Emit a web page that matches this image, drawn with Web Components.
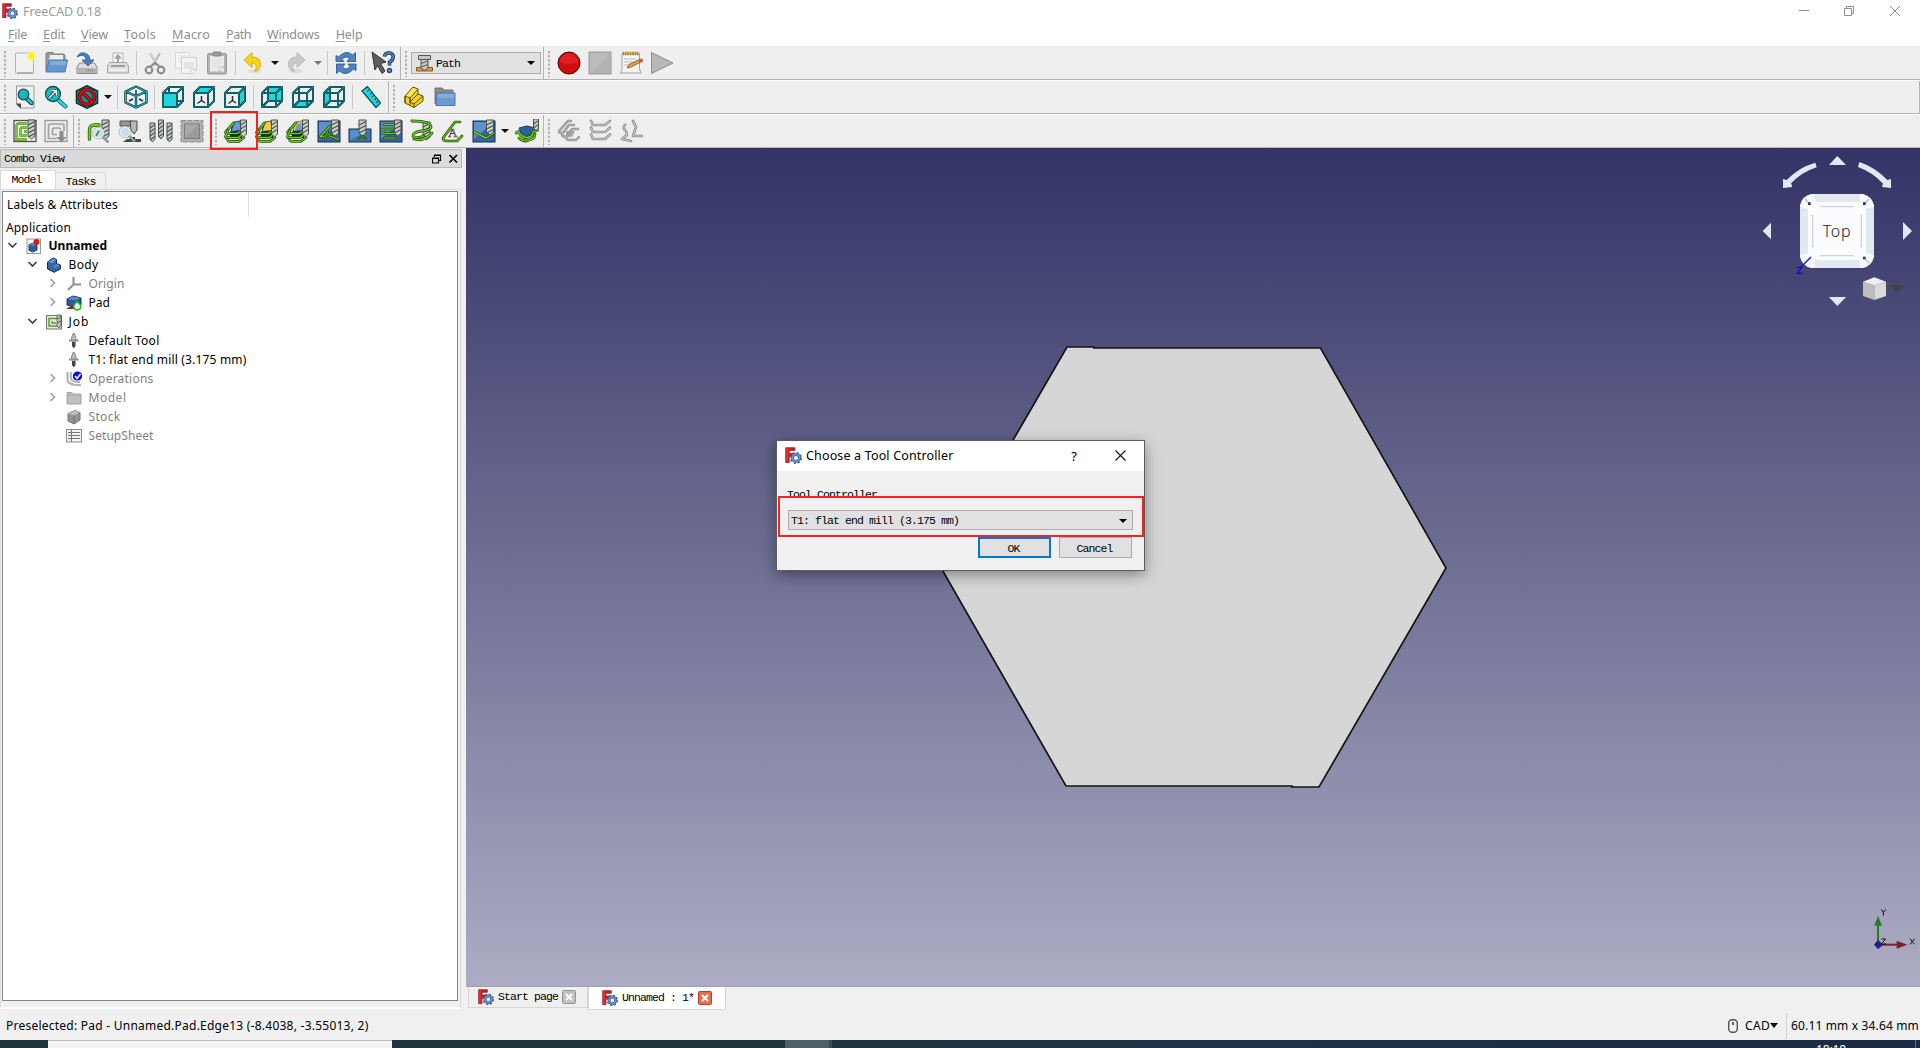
<!DOCTYPE html>
<html lang="en">
<head>
<meta charset="utf-8">
<title>FreeCAD 0.18</title>
<style>
html,body{margin:0;padding:0;height:100%;overflow:hidden;background:#f0f0f0}
</style>
</head>
<body>
<fc-window></fc-window>
<script>
const define=(name,css,html,setup)=>customElements.define(name,class extends HTMLElement{
  connectedCallback(){
    if(this.shadowRoot)return;
    const t=document.createElement('template');
    t.innerHTML='<style>'+css+'</style>'+(typeof html==='function'?html(this):html);
    this.attachShadow({mode:'open'}).appendChild(t.content.cloneNode(true));
    if(setup)setup(this);
  }
});

/* ---------- text ---------- */
const SANS='"Noto Sans","Noto Sans CJK SC",sans-serif', MONO='"Liberation Mono","Noto Sans CJK SC",monospace';
const pen=document.createElement('canvas').getContext('2d');
define('ui-text',
 ':host{display:inline-block;white-space:pre;line-height:16px;flex:none}',
 '<slot></slot>',
 el=>{
  const mono=el.hasAttribute('mono'), size=el.getAttribute('size')||(mono?'11.5':'12');
  const font=(el.hasAttribute('bold')?'bold ':'')+size+'px '+(mono?MONO:SANS);
  el.style.font=font; el.style.lineHeight='16px';
  const w=+el.getAttribute('w');
  if(w){pen.font=font;const s=el.textContent;
   el.style.letterSpacing=((w-pen.measureText(s).width)/s.length).toFixed(3)+'px';}
 });

/* ---------- icons ---------- */
const drill=(x,y,w,h,f='#c9cec9')=>{
 let s=`<path d="M${x} ${y}h${w}v${h-3}l${-w/2} 3l${-w/2} -3z" fill="${f}" stroke="#4a4f4a" stroke-width="1"/>`;
 for(let i=5;i<h-1;i+=4)s+=`<path d="M${x} ${y+i}l${w} -3.6" stroke="#4a4f4a" stroke-width="1.1"/>`;
 return s;};
const green=(d,w=2)=>`<path d="${d}" fill="none" stroke="#1f4d07" stroke-width="${w+1}" stroke-linejoin="round" stroke-linecap="round"/><path d="${d}" fill="none" stroke="#73d216" stroke-width="${w-.5}" stroke-linejoin="round" stroke-linecap="round"/>`;
const grey=(d,w=2)=>`<path d="${d}" fill="none" stroke="#8a8a8a" stroke-width="${w+1}" stroke-linejoin="round" stroke-linecap="round"/><path d="${d}" fill="none" stroke="#c8c8c8" stroke-width="${w-.6}" stroke-linejoin="round" stroke-linecap="round"/>`;
const cube=face=>{
 const faces={front:'M2 8H16V22H2z',top:'M2 8L8 2H22L16 8z',right:'M16 8L22 2V16L16 22z',rear:'M8 2H22V16H8z',bottom:'M2 22L8 16H22L16 22z',left:'M2 8L8 2V16L2 22z'};
 const back='M8 2V16H22M8 16L2 22',front='M2 8H16V22H2zM2 8L8 2H22V16L16 22M16 8L22 2';
 const ln=d=>`<path d="${d}" fill="none" stroke="#06343a" stroke-width="2" stroke-linejoin="round"/><path d="${d}" fill="none" stroke="#16a5ab" stroke-width=".8"/>`;
 const axis='<path d="M9.500 15.500V11M9.500 15.500L5.500 18.500M9.500 15.500L13 18" stroke="#1d3033" stroke-width="1.500" fill="none"/>';
 const f=`<path d="${faces[face]}" fill="#20d6da"/>`;
 if(face==='front')return ln(back)+f+ln(front);
 if(face==='top'||face==='right')return f+axis+ln(front);
 return ln(back)+f+ln(back)+ln(front);};
const depthBlock=c=>`<path d="M8 6L18 3V19L5 20z" fill="#12294a"/><path d="M10 3L16 2L17 11.500L7 12.500z" fill="${c}" stroke="#16335c" stroke-width=".8"/>`;
const greenLoops=green('M9.5 4L1.700 13Q1.200 14.500 3 14.500H13L17 12',1.7)+green('M4 11.500L1.500 17.500Q1.500 18.700 3 18.700H14L19 15',1.7)+green('M3.500 20.500Q4 22.400 6 22.400H15L20 18.500',1.6);
const blueSq='<rect x="1" y="2" width="22" height="21" fill="#3465a4" stroke="#152c50"/><path d="M2 3H22L2 20z" fill="#6ba0da" opacity=".75"/>';
const logo='<path d="M1 1H14V5H6V9H12V13H6V22H1z" fill="#d21920" stroke="#8a1015" stroke-width="1"/><path d="M1.5 1.5H5V21.5H1.5z" fill="#f0474a" opacity=".45"/><circle cx="15.5" cy="15.5" r="5" fill="none" stroke="#3c5f9a" stroke-width="4.4"/><circle cx="15.5" cy="15.5" r="7.4" fill="none" stroke="#3c5f9a" stroke-width="2.4" stroke-dasharray="2.9 2.9"/><circle cx="15.5" cy="15.5" r="5" fill="none" stroke="#6f94cb" stroke-width="2.4"/>';
const lens=(x,y,r)=>`<path d="M${x+r*.6} ${y+r*.6}L${x+r*1.8} ${y+r*1.7}" stroke="#999" stroke-width="3" stroke-linecap="round"/><circle cx="${x}" cy="${y}" r="${r}" fill="#c7dbef" fill-opacity=".9" stroke="#e8eef3" stroke-width="1.6"/><circle cx="${x}" cy="${y}" r="${r+.9}" fill="none" stroke="#8b98a5" stroke-width=".6"/>`;
const jobPath='M14 20.500H3.500V7Q3.500 4.500 6 4.500H14M14 16.500H7.500V10.500Q7.500 8.500 9.500 8.500H14M14 12.500H11';
const icons={
 logo,
 new:'<rect x="2.5" y="2" width="18" height="20.5" rx="1" fill="#f1f1ef" stroke="#b2b2b0"/><path d="M4 21.8H20" stroke="#999"/><circle cx="18.500" cy="5" r="5" fill="#fff27a" opacity=".8"/><circle cx="18.500" cy="5" r="3" fill="#fdf01c"/>',
 open:'<path d="M2 20V3Q2 1.500 4 1.500H9L10 3H19Q21 3 21 5V20z" fill="#9a9a98" stroke="#7b7b79"/><path d="M6 4H19V10H5z" fill="#eee"/><path d="M5.500 9H23.500L21 21H2z" fill="#6797cf" stroke="#4877b3"/><path d="M6.500 10H22.500L21.800 14H5.500z" fill="#8fb6e2" opacity=".7"/>',
 save:'<path d="M4.500 12L2 16V22.500H22V16L19.500 12z" fill="#dcdcda" stroke="#8b8b89"/><rect x="2.500" y="17" width="19" height="5" fill="#b5b5b3"/><path d="M11 19.500H19" stroke="#777" stroke-width="1.500" stroke-dasharray="1 1"/><path d="M2 6Q5 0 11 2.500Q15 4 15 9H19L13 15L7 9H11Q11 5 8 4.500Q5 4 2 6z" fill="#4a7dbb" stroke="#2c5990" stroke-width=".8"/>',
 print:'<path d="M7 12V2H17V12" fill="#f4f4f4" stroke="#b5b5b5"/><path d="M12 11V5M9.500 7.500L12 4.500L14.500 7.500" fill="none" stroke="#a0a0a0" stroke-width="2"/><path d="M3.500 11.500H20.500L22.500 15V22H1.500V15z" fill="#dededd" stroke="#a3a3a3"/><path d="M5 15H19" stroke="#8e8e8e" stroke-width="1.600"/><path d="M3 19H21" stroke="#efefef" stroke-width="2"/>',
 cut:'<path d="M7 2L14.500 15M17 2L9.500 15" stroke="#c0c0c0" stroke-width="2.400"/><path d="M7 2L14.500 15" stroke="#dcdcdc" stroke-width="1"/><circle cx="6" cy="19" r="3.300" fill="none" stroke="#8d8d8d" stroke-width="2.200"/><circle cx="18" cy="19" r="3.300" fill="none" stroke="#8d8d8d" stroke-width="2.200"/><path d="M7.500 15.500L12 12L16.500 15.500" fill="none" stroke="#8d8d8d" stroke-width="2.200"/>',
 copy:'<rect x="1.500" y="1.500" width="14" height="15.500" fill="#f5f5f5" stroke="#d8d8d8"/><path d="M4 5H13M4 8H8M4 11H8" stroke="#ddd"/><path d="M7.500 6.500H22.500V19L19 22.500H7.500z" fill="#f4f4f4" stroke="#d0d0d0"/><path d="M10 11H20V18H10z" fill="#e4e4e4"/><path d="M17 22.500V18.500H22" fill="#fff" stroke="#ccc"/>',
 paste:'<rect x="2.500" y="2.500" width="19" height="20.500" rx="1.500" fill="#b4b4b4" stroke="#989898"/><rect x="5" y="5" width="14" height="15.500" fill="#ebebeb"/><rect x="8" y="1" width="8" height="4" rx="1" fill="#9d9d9d" stroke="#828282"/><path d="M7 9H17M7 12H17M7 15H13" stroke="#dadada"/><path d="M14 20.500V16H19z" fill="#fff" stroke="#bbb"/>',
 undo:'<ellipse cx="13" cy="20" rx="7" ry="2" fill="#dfdfdf"/><path d="M2 9L10 1.500V6Q19 6 18.500 14Q18 19.500 12.500 20.500Q15 17 14 14.500Q13 12 10 12V16.500z" fill="#f2d51c" stroke="#d0ac12" stroke-width=".9"/>',
 redo:'<ellipse cx="11" cy="20" rx="7" ry="2" fill="#dcdcdc"/><path d="M20 9L12 1.500V6Q3 6 3.500 14Q4 19.500 9.500 20.500Q7 17 8 14.500Q9 12 12 12V16.500z" fill="#c9c9c9" stroke="#b6b6b6" stroke-width=".9"/>',
 refresh:'<path d="M2 10.500V4.500L4.500 6Q12 -2 18.500 4L21.500 1.500V10.500H13L15.500 7.500Q11.500 4 8 8.500L10 10.500z" fill="#4f82c2" stroke="#2b5a96" stroke-width=".9"/><path d="M22 13V19.500L19.500 18Q12 26 5.500 20L2.500 22.500V13H11L8.500 16Q12.500 20 16 15.500L14 13z" fill="#4f82c2" stroke="#2b5a96" stroke-width=".9"/>',
 whats:'<path d="M1 1L15 11L9.500 12.500L14 20L11 22.500L6.500 14.500L4 19z" fill="#5d605a" stroke="#2e312d"/><path d="M13.500 5.500Q14 1.500 18.500 2Q23 2.500 22 7Q21.500 9.500 18.500 11V14.500" fill="none" stroke="#16305a" stroke-width="3.600"/><path d="M13.500 5.500Q14 1.500 18.500 2Q23 2.500 22 7Q21.500 9.500 18.500 11V14.500" fill="none" stroke="#4a7dbb" stroke-width="2"/><circle cx="18.500" cy="19.500" r="2.300" fill="#4a7dbb" stroke="#16305a"/>',
 record:'<circle cx="12" cy="12" r="11" fill="#d20d10" stroke="#3a0a0a"/><path d="M3 11A9 9 0 0 1 21 11Q12 15 3 11z" fill="#ee3234" opacity=".5"/>',
 stop:'<rect x="1" y="1" width="22" height="22" fill="#b3b3b3" stroke="#9b9b9b"/><path d="M2 2H22L2 22z" fill="#bfbfbf" opacity=".7"/>',
 note:'<path d="M3 3H20.500V18L22 22H1.500L3 18z" fill="#f4f4f2" stroke="#a2a2a0"/><path d="M3.500 2.500H20.500" stroke="#a58e25" stroke-width="3.400" stroke-dasharray="1.700 .7"/><path d="M5 8H17M5 11H15M5 14H10" stroke="#bbb"/><path d="M8 17L10 13.500L20.500 8.500L22 11L12 16z" fill="#d8a54b" stroke="#80501a" stroke-width=".8"/><circle cx="22" cy="9.500" r="2" fill="#e2503c"/>',
 play:'<path d="M1.500 1.500L23 12L1.500 22.500z" fill="#b7b7b7" stroke="#8e8e8e"/>',
 fit:'<path d="M3.500 1H21V23H7L3.500 19.500z" fill="#f0f0ef" stroke="#9a9a98"/><path d="M3 18.500H8V23.500z" fill="#444"/><path d="M14 14L18.500 18" stroke="#0a3b3e" stroke-width="4.400" stroke-linecap="round"/><path d="M14 14L18.500 18" stroke="#1bc5ca" stroke-width="2.600" stroke-linecap="round"/><circle cx="10.500" cy="9.500" r="5.300" fill="#21b3ba" stroke="#0a5055" stroke-width="1.200"/>',
 zoom:'<path d="M13 14L21.500 21.500" stroke="#0a3b3e" stroke-width="4" stroke-linecap="round"/><path d="M13 14L21.500 21.500" stroke="#25dfe4" stroke-width="2.800" stroke-linecap="round"/><circle cx="9" cy="9" r="7.500" fill="#23b9c0" stroke="#0a5055" stroke-width="1.300"/><path d="M5 13L12 6M7.500 5.500H12.500V10.500" stroke="#083638" stroke-width="3" fill="none"/><path d="M5 13L12 6M7.500 5.500H12.500V10.500" stroke="#fff" stroke-width="1.500" fill="none"/>',
 draw:'<path d="M12 .8L22.500 6V18L12 23.200L1.500 18V6z" fill="#168e94" stroke="#06343a" stroke-width="1.600"/><circle cx="12" cy="12" r="7.500" fill="none" stroke="#4a0a0a" stroke-width="3.700"/><path d="M6.500 6.500L17.500 17.500" stroke="#4a0a0a" stroke-width="3.700"/><circle cx="12" cy="12" r="7.500" fill="none" stroke="#cc1117" stroke-width="2.300"/><path d="M6.500 6.500L17.500 17.500" stroke="#cc1117" stroke-width="2.300"/>',
 iso:'<g fill="none" stroke-linejoin="round"><path d="M12 1.500L22.500 6.500V17.500L12 22.500L1.500 17.500V6.500zM1.500 6.500L12 11L22.500 6.500M12 11V22.500" stroke="#06343a" stroke-width="2.400"/><path d="M12 5V11M5 16L9 14M19 16L15 14" stroke="#1d3033" stroke-width="1.500"/><path d="M12 1.500L22.500 6.500V17.500L12 22.500L1.500 17.500V6.500zM1.500 6.500L12 11L22.500 6.500M12 11V22.500" stroke="#1fc0c5" stroke-width="1"/></g>',
 ruler:'<path d="M3 6L8.500 1.500L21.500 18L17 22.500z" fill="#20d6da" stroke="#0a5055" stroke-width="1.200"/><path d="M8.500 1.500l-2 2M10.700 4.400l-2.500 2M13 7.300l-2 2M15.200 10.100l-2.500 2M17.400 13l-2 2M19.600 15.800l-2.500 2" stroke="#0a5055" stroke-width="1.100"/>',
 part:'<g stroke="#5c4d00" stroke-width="1" stroke-linejoin="round"><path d="M3 11L11 2L16 4V9L21 11V16L12 22.500L3 18z" fill="#f0d22a"/><path d="M3 11L8 13L16 4M8 13V17L12 19L21 11M12 19V22.500M3 18V11M8 13V20M8 17L16 9" fill="none"/></g><path d="M4 11L11 3L15 4.500L8 12z" fill="#fbe95c"/>',
 group:'<path d="M2 19V3H9L11 5H20V19z" fill="#898987" stroke="#72726f"/><path d="M4 8H22V20.500H3z" fill="#6b9bd2" stroke="#4877b3"/><path d="M5 9H21V13H4.500z" fill="#8fb6e2" opacity=".7"/>',
 job:`<rect x="1" y="1.500" width="22" height="21" fill="#f1f3ee" stroke="#4d524a" stroke-width="1.300"/><path d="${jobPath}" fill="none" stroke="#4b8a1f" stroke-width="2.300"/><path d="${jobPath}" fill="none" stroke="#7ec83a" stroke-width="1.300"/>`+drill(15,1,7,19),
 export:'<rect x="1" y="1.500" width="22" height="21" fill="#ebebeb" stroke="#9a9a9a" stroke-width="1.300"/><path d="M13 19.500H4.500V7Q4.500 5 6.500 5H18Q20 5 20 7V12M13 15.500H8.500V11Q8.500 9 10.500 9H14.500Q16.500 9 16.500 11" fill="none" stroke="#a3a3a3" stroke-width="1.600"/><path d="M15.500 12H19.500V18H22.500L17.500 23.500L12.500 18H15.500z" fill="#8b8b8b"/>',
 inspect:green('M2.500 20V11Q2.500 6 8 6H12',2.4)+drill(15,1,7,19)+lens(11.5,14,5)+'<path d="M12 12L9 17" stroke="#3f8b25" stroke-width="1.5"/>',
 sim:'<path d="M2 2H14V7H2z" fill="#949a94" stroke="#555"/><path d="M12 2H19V11L16 15L13 11z" fill="#b5bab5" stroke="#454a45"/><path d="M9 20H23V23H5z" fill="#454a45"/><path d="M12 18H17V21H12z" fill="#222"/>'+lens(7,13,5),
 tools:drill(1,4,5,19,'#c4c9c4')+drill(9.5,1,5,19,'#c4c9c4')+drill(18,4,5,19,'#c4c9c4'),
 fixture:'<rect x="1" y="1.500" width="22" height="21.500" fill="#b0b0b0" stroke="#8f8f8f" stroke-dasharray="5 1.500"/><rect x="4.500" y="5" width="15" height="14.500" fill="#9b9b9b" stroke="#7d7d7d"/><path d="M5 5.500H19L5 19z" fill="#b0b0b0" opacity=".6"/>',
 contour:depthBlock('#6a9ad4')+greenLoops+drill(16.500,1,6,17),
 pocketshape:depthBlock('#f2cf3a')+greenLoops+drill(16.500,1,6,17),
 profedge:depthBlock('#6a9ad4')+'<path d="M8 11L10.500 4L16 3L16.500 9" fill="none" stroke="#f2c62a" stroke-width="1.900"/>'+greenLoops+drill(16.500,1,6,17),
 pocket3d:blueSq+green('M13 7L3 18L11 16.500L22 20.500',1.7)+green('M11 12L8 21M11 16L20 13.500',1.3)+drill(14.500,1,7,16),
 drilling:'<rect x="1" y="10" width="22" height="13" fill="#3f72b3" stroke="#152c50"/><path d="M2 11H22L2 21z" fill="#6ba0da" opacity=".6"/>'+drill(11,1,7,16)+green('M11 19.5L14.5 17L18 19.5',1.2),
 face:blueSq+green('M17 5.500H5M17 10H4M4 10V14.500H17M17 19H5',1.600)+drill(15.500,1,6.500,16),
 helix:drill(13,3,7,18)+green('M2 2Q21 2 21 8Q20 11 12 12Q3 13 3 17Q4 20 14 17M4 20Q14 23 22 14',1.800),
 engrave:green('M19 3H14L2 19Q2 22 6 22H16L21 17',1.700)+'<text x="7" y="18" font-family="Liberation Serif,serif" font-size="13" fill="#b8b8b8" stroke="#444" stroke-width=".6">A</text>',
 threed:blueSq+green('M2 13L14 19L22 14',1.900)+drill(14.500,1,7,15),
 surface:'<path d="M4 9L12 7L20 9L18 15L12 17L6 14z" fill="#2b62a6" stroke="#183a66"/>'+green('M1 14Q4 11 5 15Q9 20 14 18Q18 17 18 13L23 11',1.900)+green('M4 19Q10 25 19 19L20 15',1.700)+drill(18.500,0,5,12),
 dress1:'<path d="M9 12H18L15 18H9z" fill="#a5a5a5"/>'+grey('M14 2H11L2 12Q2 14 5 14M17 6H12L5 15Q5 18 9 18M21 10H15L9 18Q9 21 13 21H19L22 18',1.400),
 dress2:grey('M3 2L5 6H17L22 2M3 8.500L5 13H17L22 8.500M3 15.500L5 20H17L22 15.500',1.700),
 dress3:grey('M6 6Q3 9 7 12L8 16L3 20L12 22M14 2L17 8L14 17H23',1.700)
};
/* 16 px tree icons */
const small={
 doc:'<rect x="1" y="1" width="13.500" height="14.500" fill="#f5f5f5" stroke="#999"/><path d="M3 6.500L7.500 5L11 6.500V12L7 14L3 12.500z" fill="#2f5c96" stroke="#173860" stroke-width=".8"/><path d="M3 6.500L7.500 5L11 6.500L7 8z" fill="#5e8cc6"/><circle cx="10.500" cy="4" r="3" fill="#e0161b"/>',
 body:'<path d="M1.500 5L7 1L10.500 2.500V6.500L14.500 8V12L8 15.300L1.500 12z" fill="#3465a4" stroke="#152c50"/><path d="M2 5L7 1.500L10 3L6 6.500z" fill="#6392cc"/><path d="M7 9L10.500 7L14 8.500L9 11z" fill="#5585c2"/>',
 origin:'<path d="M7.500 1V8.500H15M7.500 8.500L2 14" fill="none" stroke="#8f8f8f" stroke-width="2"/>',
 pad:'<path d="M1 4L7 1L15 3V10L8 12L1 10z" fill="#2d5b96" stroke="#173860"/><path d="M1.500 4L7 1.500L14.500 3.300L9 5.500z" fill="#5a8ac6"/><path d="M0 14L5 11H9V14z" fill="#9e1c1c"/><path d="M11 6.500L14.500 10V13.500L11 15.300L8 13.500V10z" fill="#fff" stroke="#10c31d" stroke-width="1.500"/>',
 job:'<rect x=".5" y="1.500" width="15" height="13.500" fill="#e4e9de" stroke="#777"/><path d="M11 12H3V4.500H11M10 9H6V7" fill="none" stroke="#5aa02c" stroke-width="1.500"/><path d="M11 1H15V12L13 14L11 12z" fill="#bfc3bf" stroke="#555" stroke-width=".8"/><path d="M11 5L15 3M11 9L15 7" stroke="#444" stroke-width=".8"/>',
 tool:'<path d="M7 .5H8.500L10 5V8H5.500V5z" fill="#b9c1b9" stroke="#6d756d" stroke-width=".8"/><path d="M3 6.500H12.500V8.500H3z" fill="#8b938b"/><path d="M6 9H9.500V13L7.800 15.500L6 13z" fill="#3f463f"/>',
 ops:'<path d="M1.500 1V9Q2.500 14.500 15 14M5 1V8Q6 11 14 11M8 5V8" fill="none" stroke="#b3b3b3" stroke-width="2.200"/><circle cx="11.500" cy="5" r="4.600" fill="#0909ec"/><path d="M9 5L11 7.500L14.500 3" fill="none" stroke="#fff" stroke-width="1.500"/>',
 folder:'<path d="M1 14V2.500H6L7 4H15V14z" fill="#b5b5b5" stroke="#a8a8a8"/><path d="M2 6H14V13H2z" fill="#bfbfbf"/>',
 stock:'<path d="M2 4.500L9 1.500L14 3.500V11L8 15L2 12z" fill="#949494" stroke="#707070"/><path d="M2 4.500L9 1.500L14 3.500L8 6.500z" fill="#bcbcbc"/><path d="M8 6.500V14.500" stroke="#707070"/>',
 sheet:'<rect x=".5" y="1.500" width="15" height="12.500" fill="#f2f2f2" stroke="#8c8c8c"/><path d="M2 4.500H14M2 7.500H14M2 10.500H14" stroke="#777"/><path d="M5.500 2V14" stroke="#777"/>'
};
define('fc-icon',':host{display:block;flex:none}svg{display:block}',el=>{
 const n=el.getAttribute('name'),s=el.getAttribute('size')||24;
 if(n.startsWith('cube-'))return `<svg width="${s}" height="${s}" viewBox="0 0 24 24">${cube(n.slice(5))}</svg>`;
 if(el.hasAttribute('tree'))return `<svg width="16" height="16" viewBox="0 0 16 16">${small[n]}</svg>`;
 return `<svg width="${s}" height="${s}" viewBox="0 0 24 24">${icons[n]}</svg>`;});

/* ---------- window chrome ---------- */
define('fc-titlebar',`:host{display:flex;height:22px;background:#fff;color:#9a9a9a;align-items:center;padding:0 19px 0 2px;box-sizing:border-box}
 ui-text{margin:1px 0 0 5px}svg{margin-left:auto}`,
 `<fc-icon name="logo" size="16"></fc-icon><ui-text size="12.5" w="78">FreeCAD 0.18</ui-text>
 <svg width="102" height="12" viewBox="0 0 102 12" fill="none" stroke="#909090"><path d="M0 5.500H10M45.500 3.500H52.500V10.500H45.500zM47.500 3.500V1.500H54.500V8.500H52.500M91 1L101 11M101 1L91 11"/></svg>`);
define('fc-menubar',`:host{display:flex;height:24px;background:#fff;color:#8d8d8d;gap:16px;padding:5px 0 0 8px;box-sizing:border-box}u{text-underline-offset:2px}`,
 [['File',19],['Edit',22],['View',27],['Tools',32],['Macro',38],['Path',25],['Windows',52.5],['Help',27]].map(([t,w])=>`<ui-text size="12.5" w="${w}"><u>${t[0]}</u>${t.slice(1)}</ui-text>`).join(''));

define('tool-btn',`:host{display:flex;align-items:center;width:31px;height:32px;flex:none}
 :host([menu]){width:43px}fc-icon{margin:0 4.500px 0 2.500px}i{width:0;border:4px solid transparent;border-top-color:var(--dd,#111);border-bottom:0;margin-left:.5px}`,
 el=>`<fc-icon name="${el.getAttribute('icon')}"></fc-icon>`+(el.hasAttribute('menu')?'<i></i>':''));
define('tool-sep',':host{display:block;flex:none;width:1px;height:24px;background:#c8c8c8;margin:0 3px 0 2px}','');
define('tool-group',`:host{display:flex;align-items:center;box-sizing:border-box;height:100%;flex:none;border-right:1px solid #b4b4b4}
 :host([last]){flex:1}
 .h{width:10px;height:27px;flex:none;background:radial-gradient(circle at 5px 2px,#b2b2b2 0 1.200px,transparent 1.500px) 0 0/10px 4.200px}`,'<div class="h"></div><slot></slot>');
define('tool-row',`:host{display:flex;height:34px;box-sizing:border-box;border-top:1px solid #fff;border-bottom:1px solid #b4b4b4;background:#efefef}`,'<slot></slot>');
define('combo-box',`:host{display:flex;align-items:center;box-sizing:border-box;border:1px solid #adadad;background:#e1e1e1;color:#000}
 i{margin-left:auto;border:4px solid transparent;border-top-color:#000;border-bottom:0}`,'<slot></slot><i></i>');
const B=(s)=>s.split(' ').map(n=>n==='|'?'<tool-sep></tool-sep>':n.endsWith('+')?`<tool-btn menu icon="${n.slice(0,-1)}"></tool-btn>`:`<tool-btn icon="${n}"></tool-btn>`).join('');
define('work-combo',`:host{display:block;flex:none;margin:0 2px 0 0}combo-box{width:130px;height:22px;padding:0 5px 0 4px}ui-text{margin:1px 0 0 3px}`,
 `<combo-box><svg width="17" height="17" viewBox="0 0 17 17"><path d="M.5 12.500H16.500V16H.5z" fill="#d99b3e" stroke="#8a5a1c"/><path d="M2.500 .5H14.500V4.500H2.500z" fill="#c3c9c3" stroke="#555"/><path d="M5 4.500H12V13L8.500 15.500L5 13z" fill="#c5cac5" stroke="#555"/><path d="M5 8.500L12 6M5 12L12 9.500" stroke="#555"/></svg><ui-text mono w="24">Path</ui-text></combo-box>`);
define('fc-toolbars',`:host{display:block;position:relative;height:102px}tool-row:first-of-type{border-top-color:#eaeaea}
 .mark{position:absolute;left:210px;top:65px;width:48px;height:39px;box-sizing:border-box;border:2px solid #fb2020;z-index:5}
 .g1{width:401px}.g2{width:143px}.r2{width:389px}.s1{width:74px}.s2{width:137px}.s3{width:333px}.none{border-right:0}`,
 `<tool-row><tool-group class="g1">${B('new open save print | cut copy paste | undo+')}${B('redo+').replace('<tool-btn','<tool-btn style="--dd:#777"')}${B('| refresh | whats')}</tool-group><tool-group class="g2"><work-combo></work-combo></tool-group><tool-group last class="none">${B('record stop note play')}</tool-group></tool-row>
 <tool-row><tool-group class="r2">${B('fit zoom draw+ | iso | cube-front cube-top cube-right | cube-rear cube-bottom cube-left | ruler')}</tool-group><tool-group last>${B('part group')}</tool-group></tool-row>
 <tool-row><tool-group class="s1">${B('job export')}</tool-group><tool-group class="s2">${B('inspect sim tools fixture')}</tool-group><tool-group class="s3">${B('contour pocketshape profedge pocket3d drilling face helix engrave threed+ surface')}</tool-group><tool-group last class="none">${B('dress1 dress2 dress3')}</tool-group></tool-row>
 <div class="mark"></div>`);

/* ---------- combo view dock ---------- */
define('tree-row',`:host{display:flex;align-items:center;height:19px;color:#000}:host([dim]){color:#808080}
 .c{width:22px;height:19px;flex:none}.c svg{display:block}fc-icon{margin:0 6.500px 0 1px}ui-text{margin:0}`,
 el=>{const a=el.getAttribute('arrow');
 return `<span class="c" style="margin-left:${20*el.getAttribute('level')}px"><svg width="22" height="19" viewBox="3 0 22 19" fill="none" stroke-width="1.700">${a==='v'?'<path d="M8.500 7L12.500 11L16.500 7" stroke="#404040"/>':a?'<path d="M10.500 5L14.500 9L10.500 13" stroke="#a2a2a2"/>':''}</svg></span><fc-icon tree name="${el.getAttribute('icon')}"></fc-icon><slot></slot>`;});
const tree=[[0,'v','doc','Unnamed',58.5,'b'],[1,'v','body','Body',30],[2,'>','origin','Origin',36,'d'],[2,'>','pad','Pad',21.500],[1,'v','job','Job',21],[2,'','tool','Default Tool',71],[2,'','tool','T1: flat end mill (3.175 mm)',158],[2,'>','ops','Operations',65,'d'],[2,'>','folder','Model',38,'d'],[2,'','stock','Stock',32,'d'],[2,'','sheet','SetupSheet',65,'d']];
define('fc-dock',`:host{display:flex;flex-direction:column;width:462px;flex:none;height:861px}
 .t{display:flex;align-items:center;box-sizing:border-box;height:19px;margin-top:1px;background:#dadada;border:1px solid #b9b9b9;padding:1px 3px 0 3px}.t svg{margin-left:auto}
 .tabs{display:flex;align-items:flex-end;height:21px;box-sizing:border-box}
 .tab{box-sizing:border-box;border:1px solid #d9d9d9;border-bottom:0;display:flex;justify-content:center;align-items:center}
 .on{background:#fff;width:56px;height:19px;padding-right:3px}.off{width:50px;height:17px;border-left:0;padding-top:1px}
 .pane{flex:1;box-sizing:border-box;border:1px solid #dcdcdc;border-bottom:2px solid #fdfdfd;display:flex;padding:1px 2px 6px 1px;margin-right:1px}
 .tree{flex:1;border:1px solid #828790;background:#fff}
 .head{display:flex;height:25px;width:246px;border-right:1px solid #e0e0e0;box-sizing:border-box;padding:5px 0 0 4px}
 .app{height:19px;padding:1px 0 0 3px;box-sizing:border-box}`,
 `<div class="t"><ui-text mono w="60">Combo View</ui-text><svg width="26" height="10" viewBox="0 0 26 10" fill="none" stroke="#000"><path d="M2.500 3V1H8.500V6.500H6M.5 4H6.500V9H.5zM.5 4.500H6.500M2.500 1.500H8.500" stroke-width="1.200"/><path d="M17.500 1L25 8.500M25 1L17.500 8.500" stroke-width="1.700"/></svg></div>
 <div class="tabs"><div class="tab on"><ui-text mono w="30">Model</ui-text></div><div class="tab off"><ui-text mono w="30">Tasks</ui-text></div></div>
 <div class="pane"><div class="tree"><div class="head"><ui-text w="111">Labels &amp; Attributes</ui-text></div><div class="app"><ui-text w="65">Application</ui-text></div>
 ${tree.map(([l,a,i,t,w,f])=>`<tree-row level="${l}" arrow="${a}" icon="${i}" ${f==='d'?'dim':''}><ui-text ${f==='b'?'bold':''} w="${w}">${t}</ui-text></tree-row>`).join('')}</div></div>`);

/* ---------- 3D view ---------- */
define('nav-cube',':host{display:block;position:absolute;left:1274px;top:-18px}svg{display:block}',
 `<svg width="180" height="190" viewBox="0 0 540 570"><g fill="#e1e9f0"><path d="M267 105L292 78L318 105zM267 501H318L292 528zM93 278V328L68 303zM489 276L516 303L489 330z"/>
 <path d="M226 98L230 112Q186 126 153 160L157 171L129 174L129 147L140 150Q176 112 226 98z"/><path d="M358 96L354 111Q398 127 429 161L426 171L453 174L453 147L442 150Q406 112 358 96z"/>
 <path d="M214 192H368L402 226V380L368 414H214L180 380V226z"/></g>
 <path d="M214 192H222L226 216H204V237L180 230V226Q186 198 214 192zM368 192H360L358 216H378V237L402 230V226Q396 198 368 192zM214 414H222L226 390H204V369L180 376V380Q186 408 214 414zM368 414H360L358 390H378V369L402 376V380Q396 408 368 414z" fill="#f7fafc"/>
 <path d="M216 216H366L378 228V378L366 390H216L204 378V228z" fill="#fafcfd"/>
 <g fill="none" stroke="#cfd2dd" stroke-width="4"><path d="M243 227V230H339V227M243 380V377H339V380M214 256H218V350H214M368 256H364V350H368"/></g>
 <g stroke="#b8bccb" stroke-width="4"><path d="M194 206L212 224M388 206L370 224M388 400L370 382"/></g><g fill="#333362"><path d="M204 217h8v8h-8zM369 217h8v8h-8zM369 380h8v8h-8z"/></g>
 <path d="M213 381L184 410" stroke="#1a1ab0" stroke-width="4"/><path d="M171 412H185L172 430H187" fill="none" stroke="#0a0ad8" stroke-width="3.600"/>
 <text x="290" y="321" text-anchor="middle" font-family="Noto Sans,sans-serif" font-weight="300" font-size="48" textLength="84" fill="#222">Top</text>
 <path d="M369 455L403 466V510L369 498z" fill="#bdbdbd"/><path d="M403 466L438 455V498L403 510z" fill="#dadada"/><path d="M369 455L403 442L438 455L403 466z" fill="#efefef"/><path d="M450 465H492L471 488z" fill="#424242"/></svg>`);
define('axis-cross',':host{display:block;position:absolute;left:1394px;top:752px}svg{display:block}',
 `<svg width="60" height="60" viewBox="480 60 180 180"><path d="M534 194V135" stroke="#228022" stroke-width="6"/><path d="M523 137L534 107L546 137z" fill="#228022"/><path d="M534 194H592" stroke="#7c2424" stroke-width="6"/><path d="M590 182V206L622 194z" fill="#7c2424"/><path d="M534 179L549 194L534 208L522 194z" fill="#20208a"/><g fill="none" stroke="#111" stroke-width="3"><path d="M544 88L550 97L557 88M550 97V107M544 177H557L544 192H558M630 176L644 193M644 176L630 193"/></g></svg>`);
define('fc-viewport',`:host{display:block;position:relative;height:839px;background:linear-gradient(#333366,#acacc4);border-bottom:1px solid #a0a0a8;box-sizing:border-box;overflow:hidden}.s{display:block}`,
 `<svg class="s" width="1454" height="838" viewBox="466 148 1454 838"><path d="M1067 347H1094V348H1320.500L1446 568L1319 787H1292V786H1066L940 566z" fill="#d6d6d6" stroke="#141414" stroke-width="1.700"/></svg><nav-cube></nav-cube><axis-cross></axis-cross>`);
define('doc-tab',`:host{display:flex;box-sizing:border-box;align-items:center;border:1px solid #d6d6d6;border-top:0;height:21px;width:120px;padding:0 0 1px 9px;background:#efefef}
 :host([on]){background:#fff;width:138px;height:23px;padding:0 0 1px 13px}svg{margin-left:4px}fc-icon{margin-right:4px}`,
 el=>{const on=el.hasAttribute('on');return `<fc-icon name="logo" size="16"></fc-icon><slot></slot><svg width="14" height="14" viewBox="0 0 14 14"><rect x=".5" y=".5" width="13" height="13" rx="1" fill="${on?'#e4704e':'#bfc3bf'}" stroke="${on?'#c23a22':'#929692'}"/><path d="M4 4L10 10M10 4L4 10" stroke="#fff" stroke-width="2.200"/></svg>`;});
define('fc-mdi',`:host{display:block;flex:1;min-width:0;margin-left:4px}.tabs{display:flex;align-items:flex-start;padding-left:2px}ui-text{margin-top:1px}`,
 `<fc-viewport></fc-viewport><div class="tabs"><doc-tab><ui-text mono w="60">Start page</ui-text></doc-tab><doc-tab on><ui-text mono w="72">Unnamed : 1*</ui-text></doc-tab></div>`);

/* ---------- dialog ---------- */
define('fc-dialog',`:host{display:block;position:absolute;left:776px;top:440px;width:369px;height:131px;box-sizing:border-box;border:1px solid #5c5c5c;background:#f0f0f0;box-shadow:0 4px 14px rgba(0,0,0,.4);z-index:10;color:#000}
 .t{display:flex;align-items:center;height:30px;background:#fff;padding:0 18px 1px 8px;box-sizing:border-box}.t>ui-text{margin-left:4px}.q{margin:0 0 0 auto!important}.t svg{margin-left:38px}
 .b{padding:13px 11px 0 10px}.l{height:26px}combo-box{height:20px;width:345px;padding:1px 5px 0 2px;margin-left:1px}
 .r{display:flex;justify-content:flex-end;gap:8px;margin:7px 1px 0 0}.r div{box-sizing:border-box;width:73px;height:21px;border:1px solid #adadad;background:#e1e1e1;display:flex;align-items:center;justify-content:center;padding:2px 2px 0 0}.r .ok{border:2px solid #0078d7}
 .m{position:absolute;left:1px;top:55px;width:366px;height:41px;box-sizing:border-box;border:2px solid #f82222}`,
 `<div class="t"><fc-icon name="logo" size="17"></fc-icon><ui-text size="12.5" w="147.5">Choose a Tool Controller</ui-text><ui-text class="q" size="13">?</ui-text><svg width="11" height="11"><path d="M.5 .5L10.500 10.500M10.500 .5L.5 10.500" stroke="#111" stroke-width="1.100"/></svg></div>
 <div class="b"><div class="l"><ui-text mono w="90">Tool Controller</ui-text></div><combo-box><ui-text mono w="168">T1: flat end mill (3.175 mm)</ui-text></combo-box>
 <div class="r"><div class="ok"><ui-text mono w="12">OK</ui-text></div><div><ui-text mono w="36">Cancel</ui-text></div></div></div><div class="m"></div>`);

/* ---------- status bar and taskbar ---------- */
define('fc-status',`:host{display:flex;align-items:center;height:31px;padding:2px 1px 0 6px;color:#000;background:#f0f0f0;box-sizing:border-box}
 .m{margin:0 7px 0 auto}.c{display:flex;align-items:center;width:41px;height:26px;border-right:1px solid #d0d0d0;margin-right:4px}i{border:4px solid transparent;border-top:5px solid #000;border-bottom:0}`,
 `<ui-text w="362.5">Preselected: Pad - Unnamed.Pad.Edge13 (-8.4038, -3.55013, 2)</ui-text>
 <svg class="m" width="10" height="14" viewBox="0 0 10 14" fill="none" stroke="#4d5255"><rect x=".7" y=".7" width="8.600" height="12.600" rx="3.500" stroke-width="1.400"/><path d="M5 3V6" stroke-width="1.800"/></svg><span class="c"><ui-text w="25">CAD</ui-text><i></i></span><ui-text w="128">60.11 mm x 34.64 mm</ui-text>`);
define('os-taskbar',`:host{display:flex;height:8px;overflow:hidden;background:linear-gradient(90deg,#21353f 40%,#1f3346 60%,#1b2b44)}
 .a{width:48px}.b{width:344px;background:#f3f3f3;border-top:1px solid #bdbdbd;box-sizing:border-box}.c{width:393px}.d{width:44px;background:#4e5f69}.e{width:3px;background:#3c4b55}.k{color:#fff;margin-left:auto;width:99px;border-right:1px solid #5d6a7c;height:8px;box-sizing:content-box;margin-right:4px}.k ui-text{margin-top:2px}`,
 `<div class="a"></div><div class="b"></div><div class="c"></div><div class="d"></div><div class="e"></div><div class="k"><ui-text w="30">18:18</ui-text></div>`);

define('fc-window',`:host{display:block;position:relative;width:1920px;height:1048px;overflow:hidden;background:#f0f0f0}.main{display:flex;height:861px}`,
 `<fc-titlebar></fc-titlebar><fc-menubar></fc-menubar><fc-toolbars></fc-toolbars><div class="main"><fc-dock></fc-dock><fc-mdi></fc-mdi></div><fc-status></fc-status><os-taskbar></os-taskbar><fc-dialog></fc-dialog>`);
</script>
</body>
</html>
